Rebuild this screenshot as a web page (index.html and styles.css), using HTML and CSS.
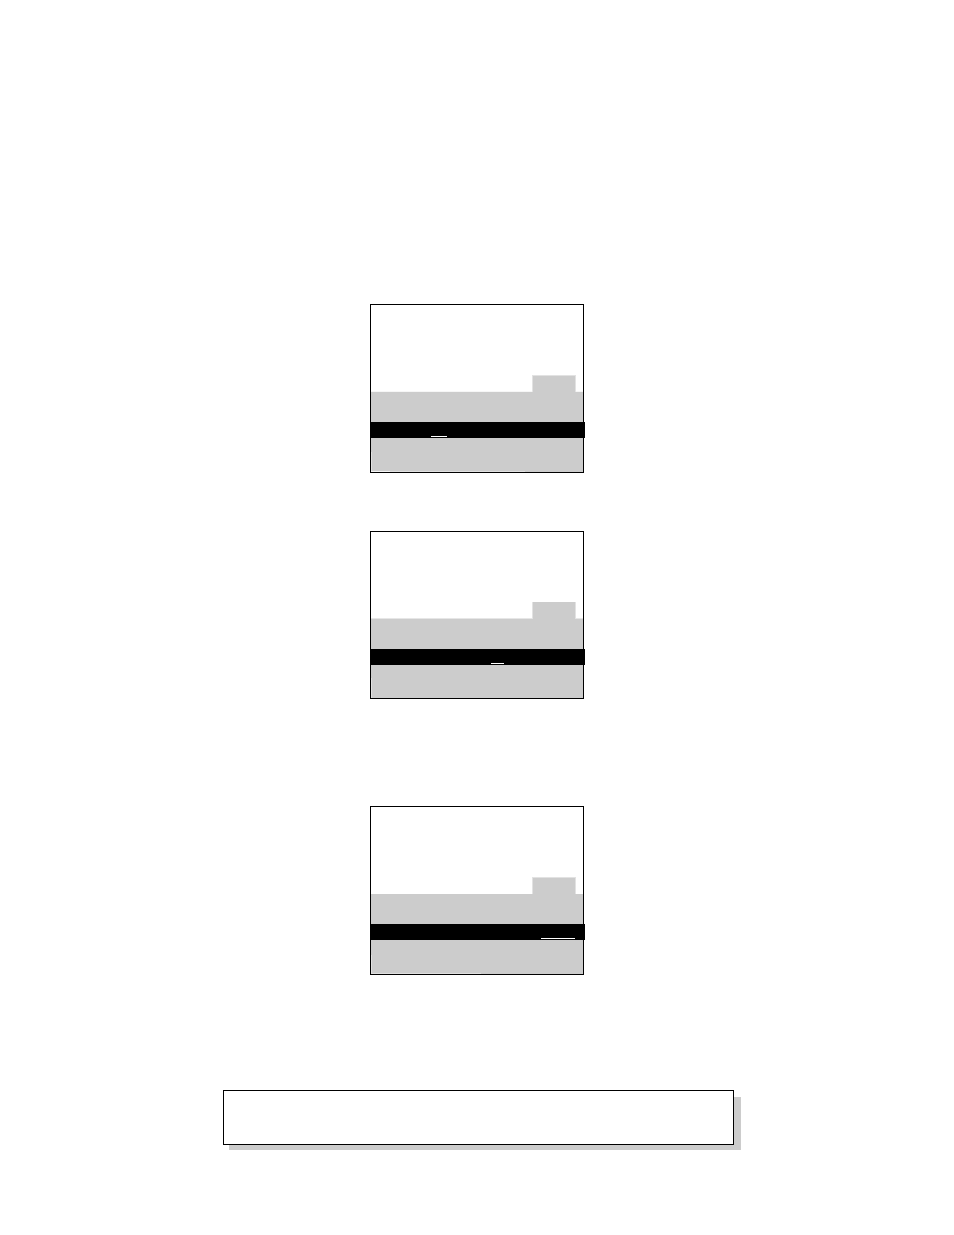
FILE: index.html
```html
<!DOCTYPE html>
<html lang="en">
<head>
    <meta charset="UTF-8">
    <meta name="viewport" content="width=device-width, initial-scale=1.0">
    <title>Screens</title>
    <link rel="stylesheet" href="styles.css">
</head>
<body>
    <main class="page">
        <section class="screen screen-first">
            <div class="view">
                <div class="tab"></div>
            </div>
            <div class="panel"></div>
            <div class="bar"><span class="cursor"></span></div>
            <div class="panel-low"></div>
        </section>

        <section class="screen screen-second">
            <div class="view">
                <div class="tab"></div>
            </div>
            <div class="panel"></div>
            <div class="bar"><span class="cursor"></span></div>
            <div class="panel-low"></div>
        </section>

        <section class="screen screen-third">
            <div class="view">
                <div class="tab"></div>
            </div>
            <div class="panel"></div>
            <div class="bar"><span class="cursor"></span></div>
            <div class="panel-low"></div>
        </section>

        <footer class="footer">
            <div class="note"></div>
        </footer>
    </main>
</body>
</html>
```

FILE: styles.css
```css
* {
    box-sizing: border-box;
}

body {
    margin: 0;
    background: #ffffff;
    font-family: "Liberation Sans", sans-serif;
}

.page {
    display: flex;
    flex-direction: column;
    align-items: center;
    padding: 304px 0 85px;
}

.screen {
    width: 100%;
    max-width: 214px;
    border: 1px solid #000000;
}

.screen-first {
    margin-bottom: 58px;
}

.screen-second {
    margin-bottom: 107px;
}

.screen-third {
    margin-bottom: 115px;
}

.view {
    display: flex;
    justify-content: flex-end;
    align-items: flex-end;
    height: 87px;
    padding-right: 7px;
    border-bottom: 1px solid #ffffff;
}

.screen-first .view {
    border-bottom-color: #f6f6f6;
}

.screen-second .view {
    border-bottom-color: #e6e6e6;
}

.tab {
    width: 44px;
    height: 17px;
    margin-bottom: -1px;
    background: #cccccc;
    box-shadow: inset 1px 1px #e2e2e2, inset -1px 0 #e2e2e2;
}

.screen-second .tab {
    box-shadow: inset 1px 0 #e2e2e2, inset -1px 0 #e2e2e2;
}

.panel {
    height: 30px;
    background: #cccccc;
}

/* the bar sticks out one pixel past the frame */
.bar {
    display: flex;
    align-items: flex-end;
    height: 16px;
    margin: 0 -2px 0 -1px;
    padding-bottom: 1px;
    background: #000000;
}

.cursor {
    height: 1px;
    background: #ffffff;
}

.screen-first .cursor {
    width: 16px;
    margin-left: 61px;
}

.screen-second .cursor {
    width: 13px;
    margin-left: 121px;
}

.screen-third .cursor {
    width: 34px;
    margin-left: 171px;
}

/* light edges on the left and the bottom */
.panel-low {
    height: 34px;
    background:
        linear-gradient(#e0e0e0, #e0e0e0) left bottom / 1px 20px no-repeat,
        #cccccc;
}

.screen-first .panel-low {
    background:
        linear-gradient(#f4f4f4, #f4f4f4) left bottom / 19px 1px no-repeat,
        linear-gradient(#e0e0e0, #e0e0e0) left bottom / 154px 1px no-repeat,
        linear-gradient(#e0e0e0, #e0e0e0) left bottom / 1px 20px no-repeat,
        #cccccc;
}

.screen-second .panel-low {
    height: 33px;
}

.screen-third .panel-low {
    background:
        linear-gradient(#e0e0e0, #e0e0e0) left bottom / 110px 1px no-repeat,
        linear-gradient(#e0e0e0, #e0e0e0) left bottom / 1px 19px no-repeat,
        #cccccc;
}

.footer {
    display: flex;
    justify-content: center;
    width: 100%;
    padding-left: 3px;
}

.note {
    position: relative;
    width: 100%;
    max-width: 511px;
    height: 55px;
    border: 1px solid #000000;
    background: #ffffff;
    background-clip: padding-box;
}

/* drop shadow: only the parts outside the box are visible */
.note::before,
.note::after {
    content: "";
    position: absolute;
    background: #cccccc;
}

.note::before {
    top: 6px;
    right: -8px;
    bottom: -6px;
    width: 7px;
}

.note::after {
    left: 5px;
    right: -8px;
    bottom: -6px;
    height: 5px;
}
```
